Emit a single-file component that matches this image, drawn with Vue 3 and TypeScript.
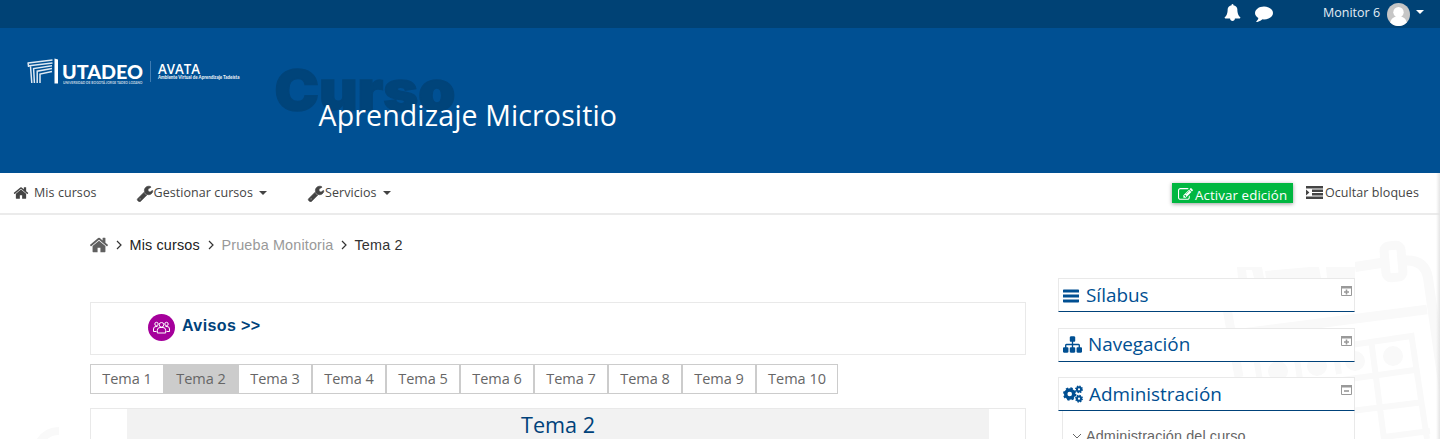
<script setup lang="ts">
const icons = {
  home: 'M1472 992v480q0 26-19 45t-45 19h-384v-384h-256v384h-384q-26 0-45-19t-19-45v-480q0-1 .5-3t.5-3l575-474 575 474q1 2 1 6zm223-69l-62 74q-8 9-21 11h-3q-13 0-21-7l-692-577-692 577q-12 8-24 7-13-2-21-11l-62-74q-8-10-7-23.5t11-21.5l719-599q32-26 76-26t76 26l244 204v-195q0-14 9-23t23-9h192q14 0 23 9t9 23v408l219 182q10 8 11 21.5t-7 23.5z',
  wrench: 'M448 1472q0-26-19-45t-45-19-45 19-19 45 19 45 45 19 45-19 19-45zm644-420l-682 682q-37 37-90 37-52 0-91-37l-106-108q-38-36-38-90 0-53 38-91l681-681q39 98 114.5 173.5t173.5 114.5zm634-435q0 39-23 106-47 134-164.5 217.5t-258.5 83.5q-185 0-316.5-131.5t-131.5-316.5 131.5-316.5 316.5-131.5q58 0 121.5 16.5t107.5 46.5q16 11 16 28t-16 28l-293 169v224l193 107q5-3 79-48.5t135.5-81 70.5-35.5q15 0 23.5 10t8.5 25z',
  comment: 'M1792 896q0 174-120 321.5t-326 233-450 85.5q-70 0-145-8-198 175-460 242-49 14-114 22-17 2-30.5-9t-17.5-29v-1q-3-4-.5-12t2-10 4.5-9.5l6-9 7-8.5 8-9q7-8 31-34.5t34.5-38 31-39.5 32.5-51 27-59 26-76q-157-89-247.5-220t-90.5-281q0-130 71-248.5t191-204.5 286-136.5 348-50.5q244 0 450 85.5t326 233 120 321.5z',
  bell: 'M1728 1408q0 52-38 90t-90 38h-448q0 106-75 181t-181 75-181-75-75-181h-448q-52 0-90-38t-38-90q50-42 91-88t85-119.5 74.5-158.5 50-206 19.5-260q0-152 117-282.5t307-158.5q-8-19-8-39 0-40 28-68t68-28 68 28 28 68q0 20-8 39 190 28 307 158.5t117 282.5q0 139 19.5 260t50 206 74.5 158.5 85 119.5 91 88z',
  edit: 'M888 1184l116-116-152-152-116 116v56h96v96h56zm440-720q-16-16-33 1l-350 350q-17 17-1 33t33-1l350-350q17-17 1-33zm80 594v190q0 119-84.5 203.5t-203.5 84.5h-832q-119 0-203.5-84.5t-84.5-203.5v-832q0-119 84.5-203.5t203.5-84.5h832q63 0 117 25 15 7 18 23 3 17-9 29l-49 49q-14 14-32 8-23-6-45-6h-832q-66 0-113 47t-47 113v832q0 66 47 113t113 47h832q66 0 113-47t47-113v-126q0-13 9-22l64-64q15-15 35-7t20 29zm-96-738l288 288-672 672h-288v-288zm444 132l-92 92-288-288 92-92q28-28 68-28t68 28l152 152q28 28 28 68t-28 68z',
  sitemap: 'M1792 1248v320q0 40-28 68t-68 28h-320q-40 0-68-28t-28-68v-320q0-40 28-68t68-28h96v-192h-512v192h96q40 0 68 28t28 68v320q0 40-28 68t-68 28h-320q-40 0-68-28t-28-68v-320q0-40 28-68t68-28h96v-192h-512v192h96q40 0 68 28t28 68v320q0 40-28 68t-68 28h-320q-40 0-68-28t-28-68v-320q0-40 28-68t68-28h96v-192q0-52 38-90t90-38h512v-192h-96q-40 0-68-28t-28-68v-320q0-40 28-68t68-28h320q40 0 68 28t28 68v320q0 40-28 68t-68 28h-96v192h512q52 0 90 38t38 90v192h96q40 0 68 28t28 68z',
}
const topics: string[] = Array.from({ length: 10 }, (_, i) => `Tema ${i + 1}`)
const activeTopic = 'Tema 2'
const blocks = [
  { title: 'Sílabus', icon: 'bars', open: false },
  { title: 'Navegación', icon: 'sitemap', open: false },
  { title: 'Administración', icon: 'cogs', open: true },
]
</script>

<template>
  <div class="page">
    <div class="topbar">
      <svg class="bell" viewBox="0 0 1792 1792"><path :d="icons.bell" /></svg>
      <svg class="comment" viewBox="0 0 1792 1792"><path :d="icons.comment" /></svg>
      <span class="user">Monitor 6</span>
      <svg class="avatar" viewBox="0 0 23 23">
        <circle cx="11.5" cy="11.5" r="11.5" fill="#c6c6c6" />
        <circle cx="11.5" cy="9.3" r="5.2" fill="#fff" />
        <path d="M3.2 19.5C4 15.6 7 13.2 11.5 13.2s7.500 2.400 8.300 6.300A11.500 11.500 0 0 1 3.200 19.500Z" fill="#fff" />
      </svg>
      <i class="caret"></i>
    </div>

    <header class="banner">
      <svg class="logo" viewBox="0 0 216 32" fill="#fff">
        <g fill="none" stroke="#dfe9f3" stroke-width="1.500">
          <path d="M2 6L26.500 3M3.200 8.800L26.500 5.900M5.800 26L4.500 9.500M8.400 26L7.600 11.600L26 8.800M11.200 26V14.200L26 11.600M14 26V17L26 14.400M2 5.500l.6 4.500" />
        </g>
        <path d="M28.500 1.500l3.500 1v24h-3.500z" />
        <text class="logo-name" x="36" y="21.500" textLength="81" lengthAdjust="spacingAndGlyphs">UTADEO</text>
        <text class="logo-sub" x="37" y="26.800" textLength="79.500" lengthAdjust="spacingAndGlyphs">UNIVERSIDAD DE BOGOTÁ JORGE TADEO LOZANO</text>
        <rect x="124" y="4" width="0.800" height="21" fill="#4f88bb" />
        <text class="logo-avata" x="132" y="16.500" textLength="42" lengthAdjust="spacingAndGlyphs">AVATA</text>
        <text class="logo-tag" x="132" y="22" textLength="81.500" lengthAdjust="spacingAndGlyphs">Ambiente Virtual de Aprendizaje Tadeísta</text>
      </svg>
      <svg class="course" viewBox="0 0 360 90">
        <text class="ghost" x="4.500" y="52" textLength="181" lengthAdjust="spacingAndGlyphs">Curso</text>
        <text class="course-title" x="48.500" y="67.500" textLength="298.500">Aprendizaje Micrositio</text>
      </svg>
    </header>

    <nav class="menu">
      <a class="item first">
        <svg viewBox="0 0 1792 1792"><path :d="icons.home" /></svg><span>Mis cursos</span>
      </a>
      <a class="item second">
        <svg viewBox="0 0 1792 1792"><path :d="icons.wrench" /></svg><span>Gestionar cursos</span><i class="caret"></i>
      </a>
      <a class="item third">
        <svg viewBox="0 0 1792 1792"><path :d="icons.wrench" /></svg><span>Servicios</span><i class="caret"></i>
      </a>
      <button class="edit">
        <svg viewBox="0 0 1792 1792"><path :d="icons.edit" /></svg><span>Activar edición</span>
      </button>
      <a class="toggle">
        <svg viewBox="0 0 17 13"><path d="M0 0h17v2.500H0zM6 3.600h11v2.300H6zM6 7.100h11v2.300H6zM0 10.500h17V13H0zM0 3.600l3.400 2.900L0 9.400z" /></svg>
        <span>Ocultar bloques</span>
      </a>
    </nav>

    <main class="body">
      <svg class="backdrop" viewBox="0 215 1440 224">
        <g fill="none" stroke="#f9f9f9">
          <path d="M1227 308L1239 377" stroke-width="9" />
          <path d="M1355 267L1384 262.500M1404 260.500Q1425 259 1428 278L1444 390" stroke-width="10" />
          <path d="M1228 335L1427 309.500" stroke-width="9.500" />
          <path d="M1250 360L1411.500 336L1427 439M1371.500 343L1384 439M1256 392L1418 369.500M1355 410.500L1420 402.500M1384 437L1430 431M1256 357l4 24M1296 353l4 26M1335 348l4 26" stroke-width="6" />
          <rect x="1385" y="245.500" width="17" height="32" rx="5" transform="rotate(-5 1393.500 261.500)" stroke-width="9" />
          <path d="M37 447Q44 431 59 431" stroke-width="8" />
        </g>
        <g fill="#f9f9f9">
          <path d="M1237 267h25l2 11h-10l-2-8h-6l1 8h-9zM1265 271l45-4h9l2 11h-55zM1326 267h29v11h-28z" />
          <circle cx="1278" cy="371" r="10" /><circle cx="1317" cy="366" r="10" />
          <circle cx="1355" cy="361" r="10" /><circle cx="1393" cy="356" r="10" />
        </g>
      </svg>

      <div class="crumbs">
        <svg class="crumb-home" viewBox="0 0 1792 1792"><path :d="icons.home" /></svg>
        <svg class="chev" viewBox="0 0 6 10"><path d="M1 1l4 4-4 4" /></svg>
        <span class="c1">Mis cursos</span>
        <svg class="chev" viewBox="0 0 6 10"><path d="M1 1l4 4-4 4" /></svg>
        <span class="c2">Prueba Monitoria</span>
        <svg class="chev" viewBox="0 0 6 10"><path d="M1 1l4 4-4 4" /></svg>
        <span class="c3">Tema 2</span>
      </div>

      <div class="columns">
        <section class="content">
          <div class="notices">
            <svg class="people" viewBox="0 0 27 27">
              <circle cx="13.500" cy="13.500" r="13.500" fill="#a5009b" />
              <g fill="none" stroke="#fff" stroke-width="1">
                <circle cx="13.500" cy="10.800" r="2.300" />
                <path d="M9.300 19v-2.500q0-3 2.700-3h3q2.700 0 2.700 3V19z" />
                <circle cx="8.500" cy="10" r="1.700" /><circle cx="18.500" cy="10" r="1.700" />
                <path d="M9.500 12.500H8q-2.500 0-2.500 2.500v2.500h3M17.500 12.500H19q2.500 0 2.500 2.500v2.500h-3" />
              </g>
            </svg>
            <a>Avisos &gt;&gt;</a>
          </div>
          <ul class="tabs">
            <li v-for="t in topics" :key="t" :class="{ active: t === activeTopic }"><span>{{ t }}</span></li>
          </ul>
          <div class="topic"><h2><span>{{ activeTopic }}</span></h2></div>
        </section>

        <aside class="side">
          <section v-for="b in blocks" :key="b.title" class="block">
            <div class="block-head" :class="b.icon">
              <svg v-if="b.icon === 'bars'" class="block-icon" viewBox="0 0 16 14"><path d="M0 1.200Q0 .500 .700 .500h14.600q.700 0 .700.700v2.300H0zM0 5.500h16v3H0zM0 10.500h16v2.300q0 .700-.700.700H.700Q0 13.500 0 12.800z" /></svg>
              <svg v-else-if="b.icon === 'sitemap'" class="block-icon" viewBox="0 0 1792 1792"><path :d="icons.sitemap" /></svg>
              <svg v-else class="block-icon" viewBox="0 0 20 18">
                <g fill="none" stroke="#004f92">
                  <circle cx="6.700" cy="9" r="4" stroke-width="3.400" />
                  <circle cx="6.700" cy="9" r="5.700" stroke-width="2" stroke-dasharray="2.300 2.177" />
                  <circle cx="16" cy="4.300" r="2.100" stroke-width="2" />
                  <circle cx="16" cy="4.300" r="3.300" stroke-width="1.300" stroke-dasharray="1.400 1.192" />
                  <circle cx="16" cy="13.700" r="2.100" stroke-width="2" />
                  <circle cx="16" cy="13.700" r="3.300" stroke-width="1.300" stroke-dasharray="1.400 1.192" />
                </g>
              </svg>
              <h3>{{ b.title }}</h3>
              <svg class="fold" viewBox="0 0 11 10">
                <path d="M.500 1v8.500h10V1" fill="#fff" stroke="#999" /><path d="M0 0h11v2.500H0z" fill="#999" />
                <path :d="b.open ? 'M3 6h5' : 'M3 6h5M5.500 3.500v5'" stroke="#999" stroke-width="1.600" />
              </svg>
            </div>
            <div v-if="b.open" class="block-body">
              <svg viewBox="0 0 10 6"><path d="M1 1l4 4 4-4" /></svg><span>Administración del curso</span>
            </div>
          </section>
        </aside>
      </div>
      <div class="edge"></div>
    </main>
  </div>
</template>

<style>
html, body { margin: 0; overflow: hidden; background: #fff; }
</style>

<style scoped>
.page { width: 1440px; height: 439px; overflow: hidden; box-sizing: border-box; font-family: "Open Sans", sans-serif; background: #fff; }
.page *, .page *::before { box-sizing: border-box; }
svg { display: block; flex: none; }
span, a, h2, h3 { white-space: nowrap; }
.caret { display: block; border: 4px solid transparent; border-top-color: currentColor; border-bottom: 0; flex: none; }

.topbar { height: 28px; background: #004275; display: flex; align-items: flex-start; justify-content: flex-end; padding-right: 16px; color: #fff; }
.bell { width: 17px; height: 17px; margin: 4px 14px 0 0; fill: #fff; }
.comment { width: 18px; height: 18px; margin: 4px 50px 0 0; fill: #fff; }
.user { font-size: 12.500px; line-height: 26px; width: 57px; margin-right: 7px; color: #e4edf5; }
.avatar { width: 23px; height: 23px; margin: 3px 6px 0 0; }
.topbar .caret { margin-top: 10px; }

.banner { height: 145px; background: #005093; display: flex; }
.logo { width: 216px; height: 32px; margin: 29px 0 0 26px; }
.logo text { font-family: Lato, sans-serif; font-weight: 700; }
.logo .logo-name { font-size: 19px; font-weight: 900; }
.logo .logo-sub { font-size: 3.600px; opacity: .75; }
.logo .logo-avata { font-family: "Open Sans", sans-serif; font-size: 14.500px; font-weight: 600; }
.logo .logo-tag { font-size: 4.600px; font-weight: 900; opacity: .9; }
.course { width: 360px; height: 90px; margin: 30px 0 0 28px; overflow: visible; }
.ghost { font: 900 55px Inter, sans-serif; fill: #00447a; stroke: #00447a; stroke-width: 1.500px; }
.course-title { font-size: 28.500px; fill: #fff; }

.menu { height: 42px; border-bottom: 2px solid #ebebeb; display: flex; align-items: flex-start; color: #444; font-size: 12.500px; line-height: 39px; letter-spacing: .07px; }
.item { display: flex; }
.item svg, .toggle svg, .edit svg { fill: currentColor; }
.item svg { width: 16px; height: 16px; margin-top: 12px; }
.first { margin-left: 13px; width: 122.500px; }
.first span { margin-left: 5px; }
.second { width: 171.500px; }
.second svg, .third svg { width: 18px; height: 17px; stroke: currentColor; stroke-width: 70px; }
.item .caret { margin: 18px 0 0 6px; }
.edit { margin: 10px 13px 0 auto; width: 121px; height: 20px; border: 0; padding: 0 0 0 6px; background: #00b740; color: #fff; font: 13.300px/24px "Open Sans", sans-serif; letter-spacing: .1px; display: flex; box-shadow: 0 1px 4px #0006; }
.edit svg { width: 15px; height: 15px; margin: 4px 2px 0 0; }
.toggle { width: 134px; display: flex; }
.toggle svg { width: 17px; height: 13px; margin: 13px 2px 0 0; }

.body { height: 224px; position: relative; }
.backdrop { position: absolute; inset: 0; width: 1440px; height: 224px; }
.crumbs { position: relative; width: 1265px; height: 52px; margin-left: 90px; background: #fff; display: flex; font: 14.400px/60px "Liberation Sans", sans-serif; }
.crumb-home { width: 20px; height: 20px; margin: 20px 7px 0 -1px; fill: #606060; }
.chev { width: 6px; height: 10px; margin: 25px 0 0; fill: none; stroke: #333; stroke-width: 1.200; }
.c1 { color: #222; width: 70px; margin: 0 8px 0 7.500px; letter-spacing: .15px; }
.c2 { color: #999; width: 112px; margin: 0 7px 0 8px; letter-spacing: .15px; }
.c3 { color: #333; margin-left: 8px; letter-spacing: .15px; }
.columns { position: relative; display: flex; margin-left: 90px; gap: 32px; }
.content { width: 936px; padding-top: 35px; flex: none; }
.notices { height: 53px; border: 1px solid #e9e9e9; background: #fff; display: flex; padding-left: 57px; }
.people { width: 27px; height: 27px; margin: 11px 7px 0 0; }
.notices a { font: 700 16px/46px "Liberation Sans", sans-serif; letter-spacing: .4px; color: #00427a; }
.tabs { list-style: none; margin: 9px 0 14px; padding: 0; display: flex; color: #666; font-size: 14.500px; line-height: 28px; }
.tabs li { width: 74px; height: 30px; border: 1px solid #ccc; text-align: center; background: #fff; }
.tabs li:last-child { width: 82px; }
.tabs .active { background: #ccc; }
.topic { height: 60px; border: 1px solid #e9e9e9; background: #fff; padding: 0 36px; }
.topic h2 { margin: 0; height: 59px; background: #f2f2f2; color: #00427a; text-align: center; font-size: 21.600px; font-weight: 400; line-height: 32px; }
.side { width: 297px; padding-top: 11px; display: flex; flex-direction: column; flex: none; }
.block { margin-bottom: 16px; }
.block:nth-child(2) { margin-bottom: 15px; }
.block-head { height: 34px; background: #fff; border: 1px solid #e9e9e9; border-bottom: 1px solid #00427a; display: flex; padding: 0 2px 0 4px; color: #004f92; }
.block-icon { fill: #004f92; }
.bars .block-icon { width: 16px; height: 14px; margin: 10px 7px 0 0; }
.sitemap .block-icon { width: 19px; height: 19px; margin: 6px 6px 0 0; }
.cogs .block-icon { width: 20px; height: 18px; margin: 7px 6px 0 0; }
.block-head h3 { margin: 0; font-size: 18.900px; font-weight: 400; line-height: 33px; }
.block-head.sitemap h3 { line-height: 30px; }
.fold { width: 11px; height: 10px; margin: 7px 0 0 auto; }
.sitemap .fold { margin-top: 7px; }
.cogs .fold { margin-top: 7px; }
.block-body { height: 60px; margin-left: 4px; background: #fff; border: solid #e9e9e9; border-width: 0 1px; padding: 14px 0 0 9px; display: flex; color: #666; font: 14.400px/22px "Liberation Sans", sans-serif; letter-spacing: .12px; }
.block-body svg { width: 10px; height: 6px; margin: 8px 4px 0 0; fill: none; stroke: #666; }
.edge { position: absolute; right: 0; top: -42px; bottom: 0; width: 4px; background: linear-gradient(90deg, #fff0, #e4e4e4); }
</style>
